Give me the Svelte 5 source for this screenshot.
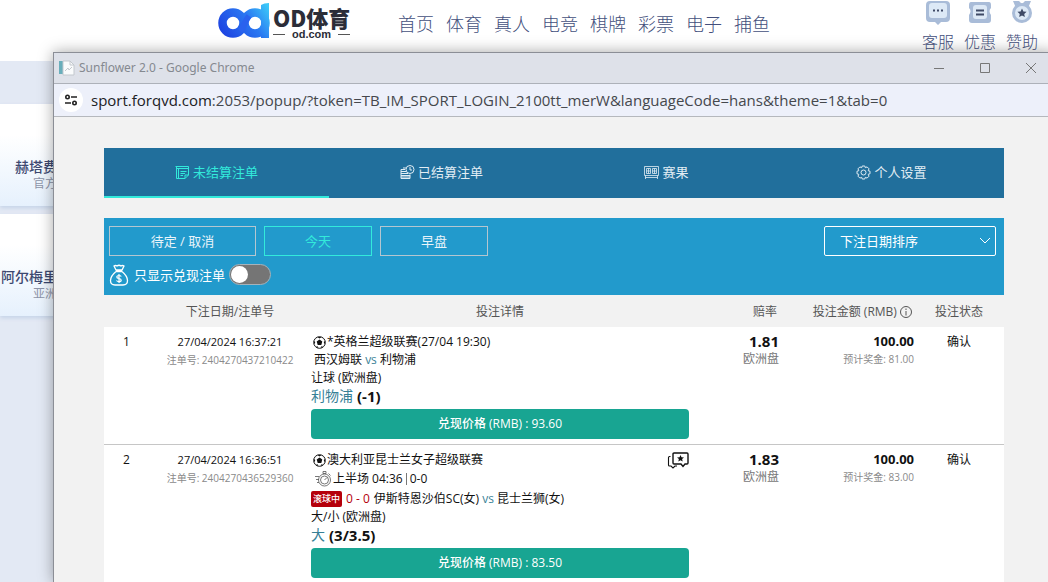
<!-- Bet list popup over the sports landing page -->
<script lang="ts">
  type Bet = {
    no: number;
    date: string;
    id: string;
    league: string;
    home: string;
    away: string;
    clock?: string;
    score?: string;
    live?: string;
    market: string;
    pick: string;
    line: string;
    cashout: string;
    odds: string;
    stake: string;
    payout: string;
  };

  const siteLinks = ['首页', '体育', '真人', '电竞', '棋牌', '彩票', '电子', '捕鱼'];

  const tabs = [
    { id: 'open', label: '未结算注单' },
    { id: 'settled', label: '已结算注单' },
    { id: 'results', label: '赛果' },
    { id: 'settings', label: '个人设置' }
  ];

  const filters = ['待定 / 取消', '今天', '早盘'];

  const bets: Bet[] = [
    {
      no: 1,
      date: '27/04/2024 16:37:21',
      id: '2404270437210422',
      league: '*英格兰超级联赛(27/04 19:30)',
      home: '西汉姆联',
      away: '利物浦',
      market: '让球 (欧洲盘)',
      pick: '利物浦',
      line: '(-1)',
      cashout: '93.60',
      odds: '1.81',
      stake: '100.00',
      payout: '81.00'
    },
    {
      no: 2,
      date: '27/04/2024 16:36:51',
      id: '2404270436529360',
      league: '澳大利亚昆士兰女子超级联赛',
      clock: '上半场 04:36',
      score: '0-0',
      live: '0 - 0',
      home: '伊斯特恩沙伯SC(女)',
      away: '昆士兰狮(女)',
      market: '大/小 (欧洲盘)',
      pick: '大',
      line: '(3/3.5)',
      cashout: '83.50',
      odds: '1.83',
      stake: '100.00',
      payout: '83.00'
    }
  ];

  let activeTab = $state('open');
  let activeFilter = $state('今天');
  let cashoutOnly = $state(false);
</script>

<div class="page">
  <header class="site-header">
    <a class="logo" href="#home" aria-label="OD体育">
      <svg width="52" height="37" viewBox="0 0 52 37" fill="none">
        <defs>
          <linearGradient id="brand" gradientUnits="userSpaceOnUse" x1="4" y1="36" x2="50" y2="4">
            <stop offset="0" stop-color="#1d3fe0" />
            <stop offset="0.6" stop-color="#2a78f2" />
            <stop offset="1" stop-color="#3cc8f8" />
          </linearGradient>
        </defs>
        <circle cx="15" cy="21" r="10.500" stroke="url(#brand)" stroke-width="8.500" />
        <circle cx="37" cy="21" r="10.500" stroke="url(#brand)" stroke-width="8.500" />
        <path d="M22 29C26 25 27 19 31 14" stroke="#2a62ee" stroke-width="6" />
        <path d="M43 3Q46 1 51 1V36H43Z" fill="url(#brand)" />
      </svg>
      <span class="logo-text">
        <strong>OD体育</strong>
        <small>od.com</small>
      </span>
    </a>
    <nav class="site-nav">
      {#each siteLinks as link}
        <a href="#{link}">{link}</a>
      {/each}
    </nav>
    <div class="site-tools">
      <a href="#service">
        <svg width="26" height="26" viewBox="0 0 26 26">
          <path d="M5 1H21Q25 1 25 5V18Q25 22 21 22H16L13 25L10 22H5Q1 22 1 18V5Q1 1 5 1Z" fill="#a9bcd8" />
          <rect x="4" y="3" width="18" height="15" rx="3" fill="#dde9f6" />
          <path d="M8 10.500h2M12 10.500h2M16 10.500h2" stroke="#3f4a66" stroke-width="2" />
        </svg>
        客服
      </a>
      <a href="#offers">
        <svg width="26" height="26" viewBox="0 0 26 26">
          <path d="M4 2H22Q24 2 24 5V8Q21 11 24 15V20Q24 23 21 23H5Q2 23 2 20V15Q5 11 2 8V5Q2 2 4 2Z" fill="#a9bcd8" />
          <rect x="6" y="5" width="14" height="14" rx="3" fill="#dde9f6" />
          <path d="M9 10.500H17M9 14.500H17" stroke="#3f4a66" stroke-width="2" />
        </svg>
        优惠
      </a>
      <a href="#sponsor">
        <svg width="26" height="26" viewBox="0 0 26 26">
          <path d="M4 1H10L13 4L16 1H22L19 8H7Z" fill="#a9bcd8" />
          <circle cx="13" cy="13" r="10" fill="#a9bcd8" />
          <circle cx="13" cy="13" r="7" fill="#dde9f6" />
          <path d="M13 8.500l1.400 3 3.200.3-2.400 2.100.7 3.200-2.900-1.700-2.900 1.700.7-3.200-2.400-2.100 3.200-.3z" fill="#3f4a66" />
        </svg>
        赞助
      </a>
    </div>
  </header>

  <aside class="sponsors">
    <a class="sponsor" href="#getafe"><b>赫塔费</b><span>官方</span></a>
    <a class="sponsor" href="#almeria"><b>阿尔梅里</b><span>亚洲</span></a>
  </aside>

  <section class="window">
    <div class="titlebar">
      <svg width="16" height="16" viewBox="0 0 16 16">
        <path d="M0 1H4V14H0Z" fill="#69aebb" />
        <path d="M4 1H11L15 5V15H4Z" fill="#fafbfc" stroke="#c3c8ce" />
        <path d="M11 1V5H15M6 11L9 8L10 10L13 7" fill="none" stroke="#c3c8ce" />
      </svg>
      <h1>Sunflower 2.0 - Google Chrome</h1>
      <div class="controls">
        <button aria-label="Minimize">
          <svg width="12" height="12" viewBox="0 0 12 12"><path d="M1 6.500H11" /></svg>
        </button>
        <button aria-label="Maximize">
          <svg width="12" height="12" viewBox="0 0 12 12"><path d="M1.500 1.500H10.500V10.500H1.500Z" /></svg>
        </button>
        <button aria-label="Close">
          <svg width="12" height="12" viewBox="0 0 12 12"><path d="M1 1L11 11M11 1L1 11" /></svg>
        </button>
      </div>
    </div>

    <div class="address">
      <button class="site-info" aria-label="Site information">
        <svg width="14" height="12" viewBox="0 0 14 12" fill="none" stroke="#222" stroke-width="1.600">
          <circle cx="3.500" cy="3" r="1.700" />
          <path d="M7 3H13M1 9H7" />
          <circle cx="10.500" cy="9" r="1.700" />
        </svg>
      </button>
      <span class="url"><b>sport.forqvd.com</b>:2053/popup/?token=TB_IM_SPORT_LOGIN_2100tt_merW&amp;languageCode=hans&amp;theme=1&amp;tab=0</span>
    </div>

    <main>
      <nav class="tabs">
        {#each tabs as tab}
          <button class:active={activeTab === tab.id} onclick={() => (activeTab = tab.id)}>
            <svg width="15" height="15" viewBox="0 0 15 15" fill="none" stroke="currentColor">
              {#if tab.id === 'open'}
                <path d="M.5 1.500H13.500V10L10 13.500H1.500V1.500M13.500 10H10V13.500M1.500 3.500H13.500M3.500 3.500V13.500M5.500 6.500H11.500M5.500 8.500H10M5.500 10.500H8" />
              {:else if tab.id === 'settled'}
                <circle cx="10" cy="4.500" r="4" />
                <path d="M10 2V5H12M1 4.500H5M1 4.500V13.500H10V9.500M1 6.500H6M1 8.500H8M1 10.500H10M1 12H10M3 3H6" />
              {:else if tab.id === 'results'}
                <path d="M.5 1.500H14.500V10.500H.5ZM2.500 3.500H6.500V8.500H2.500ZM8.500 3.500H12.500V8.500H8.500ZM2.500 6H6.500M8.500 6H12.500M4.500 3.500V8.500M10.500 3.500V8.500M1.500 10.500V14M13.500 10.500V14M1.500 12.500H13.500" stroke-width=".8" />
              {:else}
                <path d="M6.200 1H8.800L9.300 2.700L11.100 1.900L13 3.800L12.200 5.700L14 6.200V8.800L12.200 9.300L13 11.200L11.100 13.100L9.300 12.300L8.800 14H6.200L5.700 12.300L3.900 13.100L2 11.200L2.800 9.300L1 8.800V6.200L2.800 5.700L2 3.800L3.900 1.900L5.700 2.700Z" />
                <circle cx="7.500" cy="7.500" r="2.500" />
              {/if}
            </svg>
            {tab.label}
          </button>
        {/each}
      </nav>

      <div class="filter-bar">
        <div class="filter-row">
          {#each filters as filter, i}
            <button
              class="filter"
              class:wide={i === 0}
              class:active={activeFilter === filter}
              onclick={() => (activeFilter = filter)}
            >
              {filter}
            </button>
          {/each}
          <div class="sort">
            <select aria-label="排序">
              <option>下注日期排序</option>
            </select>
            <svg width="12" height="8" viewBox="0 0 12 8" fill="none" stroke="#fff"><path d="M1 1L6 6L11 1" /></svg>
          </div>
        </div>
        <div class="cashout-row">
          <svg width="20" height="22" viewBox="0 0 20 22" fill="none" stroke="#fff" stroke-width="1.300">
            <path d="M7 6L5 2Q6.500 1 8 2Q10 .5 12 2Q13.500 1 15 2L13 6ZM7 7.500H13M7 7.500C4 10 1.500 13 1.500 16.500Q1.500 21 6 21H14Q18.500 21 18.500 16.500C18.500 13 16 10 13 7.500" />
            <path d="M12.300 12.500Q11.500 11.500 10 11.500Q7.800 11.500 7.800 13Q7.800 14.200 10 14.500Q12.200 14.800 12.200 16.300Q12.200 17.700 10 17.700Q8.300 17.700 7.500 16.500M10 10V19" stroke-width="1.200" />
          </svg>
          <label for="cashout-only">只显示兑现注单</label>
          <input id="cashout-only" type="checkbox" bind:checked={cashoutOnly} />
        </div>
      </div>

      <table>
        <thead>
          <tr>
            <th class="no"></th>
            <th class="date">下注日期/注单号</th>
            <th class="details">投注详情</th>
            <th class="odds">赔率</th>
            <th class="stake">
              投注金额 (RMB)
              <svg width="12" height="12" viewBox="0 0 12 12" fill="none" stroke="#555">
                <circle cx="6" cy="6" r="5.500" />
                <path d="M6 2.500V4M6 5V9.500" />
              </svg>
            </th>
            <th class="status">投注状态</th>
          </tr>
        </thead>
        <tbody>
          {#each bets as bet}
            <tr>
              <td class="no">{bet.no}</td>
              <td class="date">
                <div class="placed">{bet.date}</div>
                <div class="muted">注单号: {bet.id}</div>
              </td>
              <td class="details">
                <div class="line league">
                  <svg width="13" height="13" viewBox="0 0 13 13">
                    <circle cx="6.500" cy="6.500" r="5.800" fill="#fff" stroke="#111" />
                    <path d="M6.500 3.500L9.300 5.600L8.300 9H4.700L3.700 5.600ZM4.500 1L8.500 1L6.500 2.500ZM.8 5L2.300 6L1.300 8.500ZM12.200 5L10.700 6L11.700 8.500ZM3 11L4.500 10L5 12ZM10 11L8.500 10L8 12Z" fill="#111" />
                  </svg>
                  <span>{bet.league}</span>
                  {#if bet.live}
                    <button class="chat" aria-label="赛事动态">
                      <svg width="22" height="17" viewBox="0 0 22 17" fill="none" stroke="#111" stroke-width="1.400">
                        <path d="M7 1H20Q21 1 21 2V11Q21 12 20 12H18L16 14.500L14 12H7Q6 12 6 11V2Q6 1 7 1Z" />
                        <path d="M3.500 4.500H2.500Q1.500 4.500 1.500 5.500V13Q1.500 14 2.500 14H4L6 16L8 14H10" stroke-width="1.100" />
                        <path d="M13.500 3l1 2.300 2.500.2-1.900 1.600.6 2.400-2.200-1.300-2.200 1.300.6-2.400L10 5.500l2.500-.2z" fill="#111" stroke="none" />
                      </svg>
                    </button>
                  {/if}
                </div>
                {#if bet.clock}
                  <div class="line clock">
                    <svg width="16" height="16" viewBox="0 0 16 16" fill="none" stroke="#555" stroke-width=".8">
                      <circle cx="9.500" cy="9" r="6" />
                      <circle cx="9.500" cy="9" r="4" />
                      <path d="M8 .5H11V2.500H8ZM9.500 9L12 6.500M0 5.500H4M1 8.500H4M2 11.500H4M13.500 2.500L15.500 4.500" />
                    </svg>
                    <span>{bet.clock}</span>
                    <span class="score">{bet.score}</span>
                  </div>
                {/if}
                <div class="line teams" class:live={bet.live}>
                  {#if bet.live}
                    <span class="badge">滚球中</span>
                    <span class="live-score">{bet.live}</span>
                  {/if}
                  <span>{bet.home} <i>vs</i> {bet.away}</span>
                </div>
                <div class="line">{bet.market}</div>
                <div class="line pick"><span>{bet.pick}</span> <b>{bet.line}</b></div>
                <button class="cashout">兑现价格 (RMB) : {bet.cashout}</button>
              </td>
              <td class="odds">
                <b>{bet.odds}</b>
                <div class="gray">欧洲盘</div>
              </td>
              <td class="stake">
                <b>{bet.stake}</b>
                <div class="muted">预计奖金: {bet.payout}</div>
              </td>
              <td class="status">确认</td>
            </tr>
          {/each}
        </tbody>
      </table>
    </main>
  </section>
</div>

<style>
  :global(body) {
    margin: 0;
  }

  .page {
    position: relative;
    min-height: 100vh;
    overflow: hidden;
    background: #e3e9f4;
    font-family: "Open Sans", "Noto Sans CJK SC", sans-serif;
    font-size: 12px;
  }

  button,
  select {
    font: inherit;
    color: inherit;
    padding: 0;
    border: 0;
    background: none;
    cursor: pointer;
  }

  a {
    color: inherit;
    text-decoration: none;
  }

  svg {
    flex: none;
  }

  .site-header {
    display: flex;
    align-items: flex-start;
    height: 61px;
    padding: 0 10px 0 218px;
    background: #fff;
    color: #434f7c;
    font-family: "Noto Sans CJK SC", sans-serif;
  }

  .logo {
    display: flex;
    gap: 3px;
    padding-top: 2px;
  }

  .logo-text {
    display: flex;
    flex-direction: column;
    width: 77px;
    padding-top: 4px;
    color: #2b2d38;
  }

  .logo-text strong {
    font-size: 22px;
    line-height: 22px;
    font-weight: 900;
    white-space: nowrap;
  }

  .logo-text small {
    display: flex;
    align-items: center;
    justify-content: space-between;
    font-family: "Liberation Sans", sans-serif;
    font-size: 11px;
    line-height: 12px;
    font-weight: bold;
  }

  .logo-text small::before,
  .logo-text small::after {
    content: "";
    width: 12px;
    height: 1px;
    background: #555;
  }

  .site-nav {
    display: flex;
    gap: 12px;
    padding: 10px 0 0 48px;
    font-size: 18px;
    line-height: 26px;
    font-weight: 300;
  }

  .site-tools {
    display: flex;
    gap: 10px;
    margin-left: auto;
    font-size: 16px;
    line-height: 30px;
    font-weight: 300;
  }

  .site-tools a {
    display: flex;
    flex-direction: column;
    align-items: center;
  }

  .sponsors {
    display: flex;
    flex-direction: column;
    gap: 8px;
    width: 57px;
    padding-top: 43px;
  }

  .sponsor {
    display: flex;
    flex-direction: column;
    align-items: flex-end;
    box-sizing: border-box;
    height: 102px;
    padding-top: 53px;
    background: linear-gradient(#fff 30%, #e6f1fd);
    box-shadow: 0 2px 4px #c5d4e8;
    color: #8d94a8;
    line-height: 14px;
    white-space: nowrap;
  }

  .sponsor b {
    color: #3d4870;
    font-size: 14px;
    line-height: 20px;
    font-weight: 500;
  }

  .window {
    position: absolute;
    top: 52px;
    right: -7px;
    bottom: 0;
    left: 53px;
    border: 1px solid #8b8e96;
    border-bottom: 0;
    background: #f2f2f2;
    box-shadow: 0 0 14px rgba(0, 0, 0, 0.35);
  }

  .titlebar {
    display: flex;
    align-items: center;
    height: 30px;
    padding-left: 5px;
    border-bottom: 1px solid #adb1b9;
    background: #dee1e9;
  }

  .titlebar h1 {
    flex: 1;
    margin: 0 0 0 4px;
    color: #858990;
    font-family: "Noto Sans", sans-serif;
    font-size: 12px;
    line-height: 16px;
    font-weight: 400;
  }

  .controls {
    display: flex;
  }

  .controls button {
    width: 46px;
    height: 30px;
  }

  .controls svg {
    display: block;
    margin: auto;
    fill: none;
    stroke: #777;
  }

  .address {
    display: flex;
    align-items: center;
    gap: 8px;
    height: 32px;
    padding-left: 5px;
    border-bottom: 1px solid #b5b8bd;
    background: #edf0fa;
    font-size: 15px;
    line-height: 18px;
  }

  .site-info {
    display: flex;
    align-items: center;
    justify-content: center;
    width: 24px;
    height: 24px;
    border-radius: 50%;
    background: #fff;
  }

  .url {
    color: #45484d;
    white-space: nowrap;
  }

  .url b {
    color: #202124;
    font-weight: 400;
  }

  main {
    padding: 31px 50px 0;
  }

  .tabs {
    display: grid;
    grid-template-columns: repeat(4, 1fr);
    height: 50px;
    background: #216f9c;
    color: #e2edf4;
    font-size: 13px;
  }

  .tabs button {
    display: flex;
    align-items: center;
    justify-content: center;
    gap: 3px;
    line-height: 18px;
    border-bottom: 2px solid transparent;
  }

  .tabs button.active {
    color: #32eadb;
    border-bottom-color: #32eadb;
  }

  .filter-bar {
    margin-top: 20px;
    padding: 8px 8px 9px 5px;
    background: #229acc;
    color: #fff;
    font-size: 13px;
    line-height: 18px;
  }

  .filter-row {
    display: flex;
    gap: 8px;
  }

  .filter {
    box-sizing: border-box;
    width: 108px;
    height: 30px;
    border: 1px solid #b4c6d0;
    color: #e8f4fa;
  }

  .filter.wide {
    width: 147px;
  }

  .filter.active {
    border-color: #32eadb;
    color: #32eadb;
  }

  .sort {
    position: relative;
    width: 172px;
    margin-left: auto;
  }

  .sort select {
    width: 100%;
    height: 30px;
    padding: 0 15px;
    border: 1px solid #fff;
    border-radius: 2px;
    appearance: none;
  }

  .sort option {
    color: #222;
  }

  .sort svg {
    position: absolute;
    top: 11px;
    right: 5px;
    pointer-events: none;
  }

  .cashout-row {
    display: flex;
    align-items: center;
    height: 23px;
    margin-top: 7px;
  }

  .cashout-row label {
    margin: 0 4px 0 5px;
  }

  .cashout-row input {
    box-sizing: border-box;
    width: 42px;
    height: 21px;
    margin: 0;
    padding: 1px;
    border: 1px solid #a5b2ba;
    border-radius: 11px;
    background: #757575;
    appearance: none;
    cursor: pointer;
  }

  .cashout-row input::before {
    content: "";
    display: block;
    width: 17px;
    height: 17px;
    border-radius: 50%;
    background: #fff;
  }

  .cashout-row input:checked {
    background: #18a592;
  }

  .cashout-row input:checked::before {
    margin-left: auto;
  }

  table {
    width: 100%;
    table-layout: fixed;
    border-collapse: collapse;
    line-height: 18px;
    color: #111;
  }

  th {
    box-sizing: border-box;
    height: 32px;
    padding: 2px 0 0;
    color: #555;
    font-weight: 400;
    white-space: nowrap;
  }

  th.odds,
  th.stake {
    padding-right: 2px;
  }

  th svg {
    vertical-align: -2px;
  }

  td {
    padding: 6px 0 5px;
    vertical-align: top;
    background: #fff;
    border-bottom: 1px solid #c6c6c6;
  }

  .no {
    width: 5%;
    text-align: center;
  }

  .date {
    width: 18%;
    text-align: center;
  }

  .details {
    width: 42%;
  }

  .odds {
    width: 10%;
    text-align: right;
  }

  .stake {
    width: 15%;
    text-align: right;
  }

  .status {
    width: 10%;
    text-align: center;
  }

  td b {
    display: block;
    font-size: 13px;
    line-height: 16px;
    font-weight: 700;
  }

  td.odds b,
  td.stake b {
    margin-bottom: 1px;
  }

  td.odds b {
    font-size: 15px;
  }

  .placed {
    font-size: 11px;
  }

  .muted {
    color: #8a8a8a;
    font-size: 10px;
  }

  .gray {
    color: #777;
  }

  .line {
    display: flex;
    align-items: center;
    height: 18px;
    white-space: nowrap;
  }

  .league {
    gap: 1px;
    padding-left: 2px;
  }

  .chat {
    display: flex;
    margin-left: auto;
  }

  .clock {
    height: 20px;
    padding-left: 4px;
    gap: 2px;
  }

  .score {
    margin-left: 1px;
    padding-left: 3px;
    border-left: 1px solid #777;
    line-height: 12px;
  }

  .teams {
    padding-left: 3px;
  }

  .teams.live {
    height: 19px;
    gap: 4px;
    padding-left: 0;
  }

  .teams i {
    color: #3d8599;
    font-style: normal;
  }

  .badge {
    width: 31px;
    border-radius: 2px;
    background: #b5000b;
    color: #fff;
    font-size: 9px;
    font-weight: 500;
    line-height: 16px;
    text-align: center;
  }

  .live-score {
    color: #b5000b;
  }

  .pick {
    height: 17px;
    gap: 4px;
    font-size: 14px;
    color: #368096;
  }

  .pick b {
    color: #111;
    font-size: 15px;
  }

  .cashout {
    display: block;
    width: 100%;
    height: 30px;
    margin-top: 5px;
    border-radius: 4px;
    background: #18a592;
    color: #fff;
    font-weight: 500;
  }
</style>
